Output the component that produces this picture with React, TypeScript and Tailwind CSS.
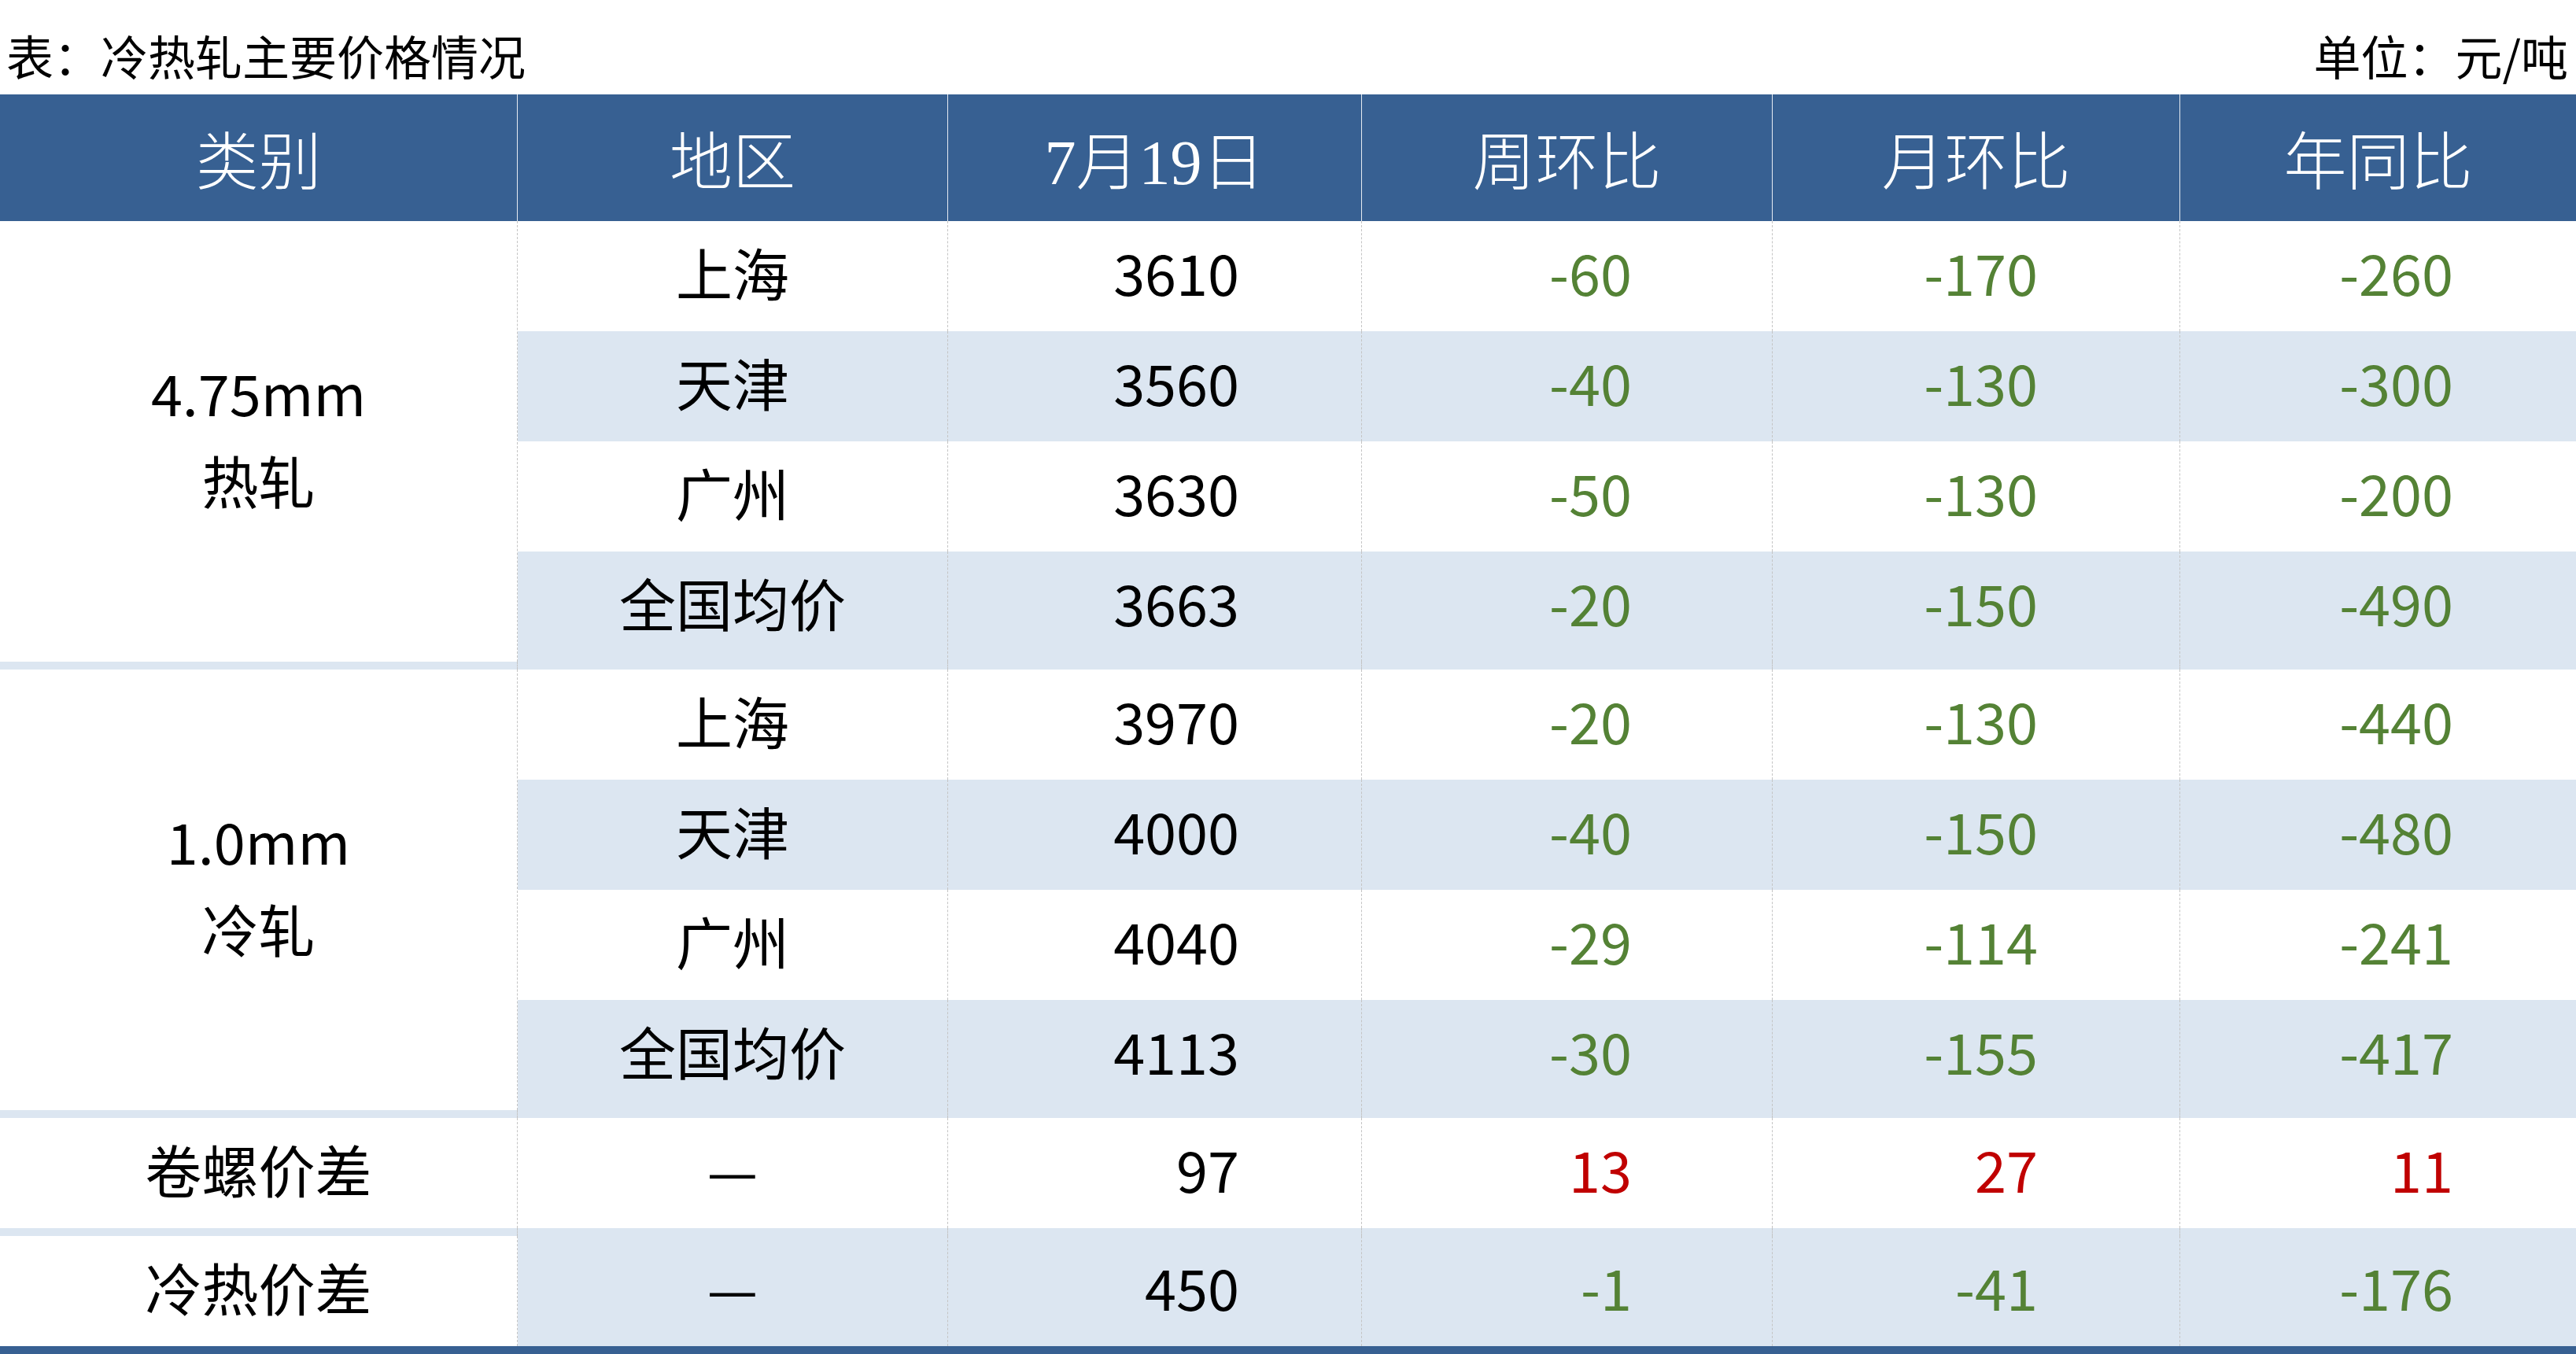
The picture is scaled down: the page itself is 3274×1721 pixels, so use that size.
import React from 'react';

/* Cold/hot-rolled steel price table */

type Tone = 'down' | 'up';

interface Row {
  region: string;
  price: string;
  week: string;
  month: string;
  year: string;
  tone?: Tone;
}

const HOT: Row[] = [
  { region: '上海', price: '3610', week: '-60', month: '-170', year: '-260' },
  { region: '天津', price: '3560', week: '-40', month: '-130', year: '-300' },
  { region: '广州', price: '3630', week: '-50', month: '-130', year: '-200' },
  { region: '全国均价', price: '3663', week: '-20', month: '-150', year: '-490' },
];

const COLD: Row[] = [
  { region: '上海', price: '3970', week: '-20', month: '-130', year: '-440' },
  { region: '天津', price: '4000', week: '-40', month: '-150', year: '-480' },
  { region: '广州', price: '4040', week: '-29', month: '-114', year: '-241' },
  { region: '全国均价', price: '4113', week: '-30', month: '-155', year: '-417' },
];

const SANS = "font-['Noto_Sans_CJK_SC','Noto_Sans',sans-serif]";
const DASH = 'border-r border-dashed border-[#c4c4c4]';

function Cells({ row, shaded }: { row: Row; shaded: boolean }) {
  const bg = shaded ? 'bg-[#dce6f1]' : 'bg-white';
  const tone = row.tone === 'up' ? 'text-[#c00000]' : 'text-[#548235]';
  return (
    <div className={`flex h-[140px] ${bg}`}>
      <div className={`w-[547px] ${DASH} flex items-center justify-center pb-[12px] text-black`}>
        {row.region}
      </div>
      <div className={`w-[526px] ${DASH} flex items-center justify-end pb-[12px] pr-[155px] text-black`}>
        {row.price}
      </div>
      <div className={`w-[522px] ${DASH} flex items-center justify-end pb-[12px] pr-[178px] ${tone}`}>
        {row.week}
      </div>
      <div className={`w-[518px] ${DASH} flex items-center justify-end pb-[12px] pr-[180px] ${tone}`}>
        {row.month}
      </div>
      <div className={`w-[503px] flex items-center justify-end pb-[12px] pr-[156px] ${tone}`}>
        {row.year}
      </div>
    </div>
  );
}

function Spacer() {
  return (
    <div className="flex h-[10px] bg-[#dce6f1]">
      <div className={`w-[658px] ${DASH}`} />
      <div className={`w-[547px] ${DASH}`} />
      <div className={`w-[526px] ${DASH}`} />
      <div className={`w-[522px] ${DASH}`} />
      <div className={`w-[518px] ${DASH}`} />
      <div className="w-[503px]" />
    </div>
  );
}

function Group({ label, sub, rows }: { label: string; sub: string; rows: Row[] }) {
  return (
    <div className="flex">
      <div className={`w-[658px] ${DASH} bg-white flex flex-col items-center justify-center pb-[16px] leading-[111px] text-black`}>
        <span>{label}</span>
        <span>{sub}</span>
      </div>
      <div className="flex flex-col">
        {rows.map((r, i) => (
          <Cells key={r.region} row={r} shaded={i % 2 === 1} />
        ))}
      </div>
    </div>
  );
}

function Single({ label, row, shaded }: { label: string; row: Row; shaded: boolean }) {
  return (
    <div className="flex">
      <div className={`w-[658px] h-[140px] pb-[12px] ${DASH} bg-white flex items-center justify-center text-black`}>
        {label}
      </div>
      <Cells row={row} shaded={shaded} />
    </div>
  );
}

const HEADERS = [
  { text: '类别', w: 'w-[658px]' },
  { text: '地区', w: 'w-[547px]' },
  { text: '7月19日', w: 'w-[526px]' },
  { text: '周环比', w: 'w-[522px]' },
  { text: '月环比', w: 'w-[518px]' },
  { text: '年同比', w: 'w-[503px]' },
];

export default function App() {
  return (
    <div className={`w-[3274px] h-[1721px] bg-white overflow-hidden ${SANS}`}>
      {/* caption */}
      <div className="h-[120px] flex items-center justify-between pt-[20px] pl-[8px] pr-[10px] text-[60px] leading-none text-black">
        <span>表：冷热轧主要价格情况</span>
        <span>单位：元/吨</span>
      </div>

      {/* header */}
      <div className="flex h-[161px] bg-[#376092] text-white">
        {HEADERS.map((h, i) => (
          <div
            key={h.text}
            className={`${h.w} flex items-center justify-center pt-[12px] text-[80px] leading-none font-light font-['Liberation_Serif','Noto_Sans_CJK_SC',serif] ${
              i < HEADERS.length - 1 ? 'border-r border-[#e6ebf2]' : ''
            }`}
          >
            {h.text}
          </div>
        ))}
      </div>

      {/* body */}
      <div className="text-[72px] leading-none">
        <Group label="4.75mm" sub="热轧" rows={HOT} />
        <Spacer />
        <Group label="1.0mm" sub="冷轧" rows={COLD} />
        <Spacer />
        <Single
          label="卷螺价差"
          row={{ region: '—', price: '97', week: '13', month: '27', year: '11', tone: 'up' }}
          shaded={false}
        />
        <Spacer />
        <Single
          label="冷热价差"
          row={{ region: '—', price: '450', week: '-1', month: '-41', year: '-176' }}
          shaded={true}
        />
        <div className="h-[12px] bg-[#376092]" />
      </div>
    </div>
  );
}
